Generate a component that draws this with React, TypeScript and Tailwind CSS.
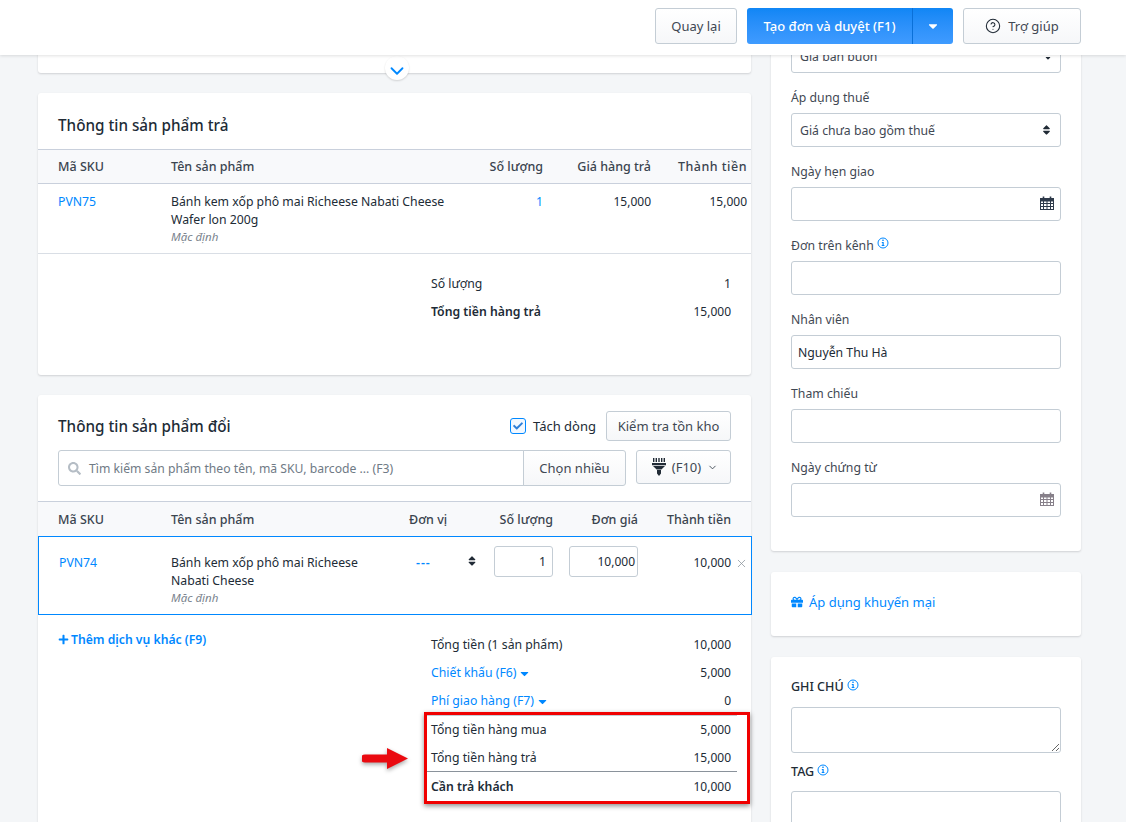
import React from "react";
import { FaCaretDown, FaGift, FaPlus, FaSearch, FaSort, FaCheck } from "react-icons/fa";
import { ChevronDown, X, CircleHelp } from "lucide-react";

function Info() {
  return (
    <svg viewBox="0 0 12 12" className="inline-block w-[12px] h-[12px] align-top ml-[3px] mt-[1px]">
      <circle cx="6" cy="6" r="5" fill="none" stroke="#0088ff" strokeWidth="1" />
      <rect x="5.3" y="2.6" width="1.4" height="1.4" fill="#0088ff" />
      <path d="M4.8 5h1.9v3h.7v.9H4.7V8h.8V5.9h-.7z" fill="#0088ff" />
    </svg>
  );
}

function Calendar({ color }: { color: string }) {
  return (
    <svg viewBox="0 0 14 14" className="w-[14px] h-[14px] -mt-[3px]" fill="none" stroke={color} strokeWidth="1">
      <rect x="0.5" y="2.5" width="13" height="11" />
      <path d="M0.5 2.5h13v2.5h-13z" fill={color} />
      <path d="M0.5 7.5h13M0.5 10.5h13M3.5 5v8.5M7 5v8.5M10.5 5v8.5" />
      <path d="M3.5 0.5v2.5M10.5 0.5v2.5" strokeWidth="1.6" />
    </svg>
  );
}

function Scanner() {
  return (
    <svg viewBox="0 0 14 18" className="w-[14px] h-[18px]" fill="#212b36">
      <path d="M1 0h1.4v4H1zM3.6 0H5v4H3.6zM6.3 0h1.4v4H6.3zM9 0h1.4v4H9zM11.6 0H13v4h-1.4z" />
      <path d="M0 5h14v2.2H0zM1 8h12l-3.6 3.4H4.6zM5 12h4v3.4L7 18l-2-2.6z" />
    </svg>
  );
}

function Label({ children }: { children: React.ReactNode }) {
  return <div className="h-[26px] pt-[1px] leading-[20px] text-[#3f4853]">{children}</div>;
}

function Field({ label, children, mb = "mb-[14px]" }: { label: React.ReactNode; children?: React.ReactNode; mb?: string }) {
  return (
    <div className={mb}>
      <Label>{label}</Label>
      <div className="h-[34px] border border-[#c4cdd5] rounded-[3px] flex items-center justify-between bg-white pl-[8px] pr-[6px]">
        {children}
      </div>
    </div>
  );
}

function SumRow({ label, value, blue, bold }: { label: React.ReactNode; value: string; blue?: boolean; bold?: boolean }) {
  return (
    <div className="h-[28px] flex items-center justify-between pl-[4px] pr-[6px]">
      <span className={(blue ? "text-[#0088ff] " : "") + (bold ? "font-semibold" : "")}>{label}</span>
      <span className="text-[12px]">{value}</span>
    </div>
  );
}

const card = "bg-white rounded-[3px] shadow-[0_1px_2px_rgba(63,63,68,0.2)]";
const btn = "border border-[#c4cdd5] rounded-[3px] bg-gradient-to-b from-white to-[#f6f7f9] flex items-center justify-center text-[#3f4853]";

export default function App() {
  return (
    <div className="relative w-[1126px] h-[822px] overflow-hidden bg-[#f4f6f8] text-[#212b36] text-[12.25px] leading-[18px] font-['Noto_Sans','Liberation_Sans',sans-serif]">
      <header className="absolute top-0 left-0 right-0 h-[55px] z-10 bg-white shadow-[0_1px_3px_rgba(0,0,0,0.12)] flex items-center justify-end pr-[45px] pb-[3px] gap-[10px] text-[13px]">
        <div className={btn + " w-[82px] h-[36px]"}>Quay lại</div>
        <div className="flex h-[36px] text-white rounded-[3px] overflow-hidden">
          <div className="w-[165px] flex items-center justify-center bg-gradient-to-b from-[#0f86f5] to-[#3f9bff] font-medium">Tạo đơn và duyệt (F1)</div>
          <div className="w-[41px] flex items-center justify-center bg-gradient-to-b from-[#0f86f5] to-[#3f9bff] border-l border-[#0a70d8]"><FaCaretDown className="w-[14px] h-[14px]" /></div>
        </div>
        <div className={btn + " w-[118px] h-[36px] gap-[7px]"}><CircleHelp className="w-[16px] h-[16px] text-[#212b36]" strokeWidth={1.6} /><span>Trợ giúp</span></div>
      </header>

      <main className="flex pl-[38px] gap-[20px] items-start">
        <div className="w-[713px] flex flex-col gap-[20px] relative">
          <div className={card + " h-[73px] relative"}>
            <div className="absolute left-[347px] top-[56px] w-[24px] h-[24px] rounded-full bg-white flex items-center justify-center shadow-[0_1px_2px_rgba(0,0,0,0.15)]">
              <ChevronDown className="w-[22px] h-[22px] mt-[5px] text-[#0088ff]" strokeWidth={2} />
            </div>
          </div>

          <section className={card + " h-[282px]"}>
            <h2 className="h-[56px] pt-[8px] pl-[20px] flex items-center text-[15.25px] font-medium">Thông tin sản phẩm trả</h2>
            <div className="flex h-[35px] items-center pl-[20px] pr-[4px] bg-[#f8f9fb] border-y border-[#c9d0dc] font-medium text-[12.5px] text-[#3a444f]">
              <div className="w-[113px]">Mã SKU</div>
              <div className="w-[285px]">Tên sản phẩm</div>
              <div className="w-[87px] text-right">Số lượng</div>
              <div className="w-[108px] text-right">Giá hàng trả</div>
              <div className="w-[96px] text-right tracking-[0.5px]">Thành tiền</div>
            </div>
            <div className="flex h-[70px] pt-[9px] pl-[20px] pr-[4px] border-b border-[#d9dee5]">
              <div className="w-[113px] text-[#0088ff]">PVN75</div>
              <div className="w-[285px]">
                <div>Bánh kem xốp phô mai Richeese Nabati Cheese Wafer lon 200g</div>
                <div className="text-[11.5px] italic text-[#7a838d] -mt-px">Mặc định</div>
              </div>
              <div className="w-[87px] text-right text-[#0088ff]">1</div>
              <div className="w-[108px] text-right text-[12px]">15,000</div>
              <div className="w-[96px] text-right text-[12px]">15,000</div>
            </div>
            <div className="pl-[393px] pr-[20px] pt-[16px]">
              <div className="h-[28px] flex items-center justify-between"><span>Số lượng</span><span>1</span></div>
              <div className="h-[28px] flex items-center justify-between font-semibold"><span>Tổng tiền hàng trả</span><span className="font-normal text-[12px]">15,000</span></div>
            </div>
          </section>

          <section className={card + " h-[460px]"}>
            <div className="h-[55px] pl-[20px] pr-[20px] pt-[16px] flex items-start justify-between">
              <h2 className="h-[30px] flex items-center text-[15.25px] font-medium">Thông tin sản phẩm đổi</h2>
              <div className="flex items-center">
                <div className="w-[16px] h-[16px] border border-[#0088ff] rounded-[3px] bg-[#f2f8ff] flex items-center justify-center mr-[7px]"><FaCheck className="w-[10px] h-[10px] text-[#2f7fd8]" /></div>
                <span className="mr-[10px] text-[13px]">Tách dòng</span>
                <div className={btn + " w-[125px] h-[30px] text-[13px]"}>Kiểm tra tồn kho</div>
              </div>
            </div>
            <div className="flex pl-[20px] pr-[20px] h-[51px] items-start">
              <div className="w-[466px] h-[36px] border border-[#c4cdd5] rounded-l-[3px] flex items-center pl-[9px] gap-[8px] text-[#6f7a85] text-[12.2px]">
                <FaSearch className="w-[13px] h-[13px] text-[#b5bdc5]" />
                <span className="mt-[1px]">Tìm kiếm sản phẩm theo tên, mã SKU, barcode ... (F3)</span>
              </div>
              <div className={btn + " w-[103px] h-[36px] -ml-px rounded-l-none text-[13px]"}>Chọn nhiều</div>
              <div className={btn + " w-[95px] h-[34px] ml-[10px] gap-[6px] text-[13px] pl-[3px]"}>
                <Scanner /><span>(F10)</span><ChevronDown className="w-[11px] h-[11px]" />
              </div>
            </div>
            <div className="flex h-[35px] items-center pt-[2px] pl-[20px] pr-[20px] bg-[#f8f9fb] border-t border-[#c9d0dc] font-medium text-[12.5px] text-[#3a444f]">
              <div className="w-[113px]">Mã SKU</div>
              <div className="w-[238px]">Tên sản phẩm</div>
              <div className="w-[60px]">Đơn vị</div>
              <div className="w-[84px] text-right">Số lượng</div>
              <div className="w-[85px] text-right">Đơn giá</div>
              <div className="w-[93px] text-right">Thành tiền</div>
            </div>
            <div className="relative flex h-[79px] w-[714px] border border-[#0088ff] pl-[20px] pr-[19px] pt-[17px]">
              <div className="w-[112px] text-[#0088ff]">PVN74</div>
              <div className="w-[238px] pr-[30px]">
                <div>Bánh kem xốp phô mai Richeese Nabati Cheese</div>
                <div className="text-[11.5px] italic text-[#7a838d] -mt-px">Mặc định</div>
              </div>
              <div className="w-[85px] flex justify-between pl-[7px] pr-[18px] text-[#0088ff]"><span className="font-semibold tracking-[1px]">---</span><FaSort className="w-[8px] h-[12px] text-[#212b36] mt-[1px]" /></div>
              <div className="w-[59px] h-[31px] -mt-[8px] border border-[#c4cdd5] rounded-[3px] flex items-center justify-end pr-[6px]">1</div>
              <div className="w-[69px] h-[31px] -mt-[8px] ml-[16px] border border-[#c4cdd5] rounded-[3px] flex items-center justify-end pr-[2px] text-[12px]">10,000</div>
              <div className="w-[93px] text-right text-[12px]">10,000</div>
              <X className="absolute left-[696px] top-[20px] w-[13px] h-[13px] text-[#8a929b]" strokeWidth={1.4} />
            </div>
            <div className="flex pl-[20px] pt-[16px]">
              <div className="w-[369px] text-[#0088ff] font-semibold flex items-start h-[20px] gap-[2px]"><FaPlus className="w-[11px] h-[11px] mt-[3px]" /><span className="text-[12.2px]">Thêm dịch vụ khác (F9)</span></div>
              <div className="w-[310px]">
                <SumRow label="Tổng tiền (1 sản phẩm)" value="10,000" />
                <SumRow blue label={<span className="inline-flex items-center gap-[2px]">Chiết khấu (F6)<FaCaretDown className="w-[13px] h-[13px]" /></span>} value="5,000" />
                <SumRow blue label={<span className="inline-flex items-center gap-[2px]">Phí giao hàng (F7)<FaCaretDown className="w-[13px] h-[13px]" /></span>} value="0" />
                <div className="border-t border-[#c4cdd5]">
                  <SumRow label="Tổng tiền hàng mua" value="5,000" />
                  <SumRow label="Tổng tiền hàng trả" value="15,000" />
                </div>
                <div className="border-t border-[#8a929b] -mt-px pt-px">
                  <SumRow bold label="Cần trả khách" value="10,000" />
                </div>
              </div>
            </div>
          </section>

          {/* annotation over the totals */}
          <div className="absolute left-[386px] top-[712px] w-[326px] h-[92px] border-[3px] border-[#f00000] shadow-[0_2px_5px_rgba(0,0,0,0.45)]" />
          <svg viewBox="0 0 48 22" className="absolute left-[324px] top-[748px] w-[48px] h-[22px] drop-shadow-[0_2px_2px_rgba(0,0,0,0.35)]">
            <path d="M3 6.5h22V0l21 10.5L25 21v-6.5H3a4 4 0 0 1 0-8z" fill="#ea0a10" />
          </svg>
        </div>

        <aside className="w-[310px] flex flex-col gap-[21px]">
          <div className={card + " pt-[39px] px-[20px] pb-[20px]"}>
            <div className="h-[34px] border border-[#c4cdd5] rounded-[3px] flex items-center justify-between pl-[8px] pr-[8px] mb-[14px]">
              <span className="text-[#3f4853] mt-[1px]">Giá bán buôn</span><FaCaretDown className="w-[8px] h-[8px] mt-[4px]" />
            </div>
            <Field label="Áp dụng thuế"><span className="text-[#3f4853] mt-[1px]">Giá chưa bao gồm thuế</span><FaSort className="w-[9px] h-[12px] mr-[3px]" /></Field>
            <Field label="Ngày hẹn giao"><span /><Calendar color="#2e3a4a" /></Field>
            <Field label={<>Đơn trên kênh<Info /></>} />
            <Field label="Nhân viên"><span className="-ml-[2px] mt-[2px]">Nguyễn Thu Hà</span></Field>
            <Field label="Tham chiếu" />
            <Field label="Ngày chứng từ"><span /><Calendar color="#87808a" /></Field>
          </div>
          <div className={card + " h-[64px] pl-[20px] pb-[4px] flex items-center gap-[6px] text-[#0088ff] text-[13px]"}>
            <FaGift className="w-[12px] h-[12px]" /><span>Áp dụng khuyến mại</span>
          </div>
          <div className={card + " px-[20px] pt-[21px] pb-[20px]"}>
            <div className="h-[18px] font-medium text-[12.5px] mb-[11px]">GHI CHÚ<Info /></div>
            <textarea className="block w-full h-[46px] border border-[#c4cdd5] rounded-[3px] mb-[10px]" />
            <div className="h-[18px] font-medium text-[12.5px] mb-[10px]">TAG<Info /></div>
            <div className="h-[60px] border border-[#c4cdd5] rounded-[3px]" />
          </div>
        </aside>
      </main>
    </div>
  );
}
